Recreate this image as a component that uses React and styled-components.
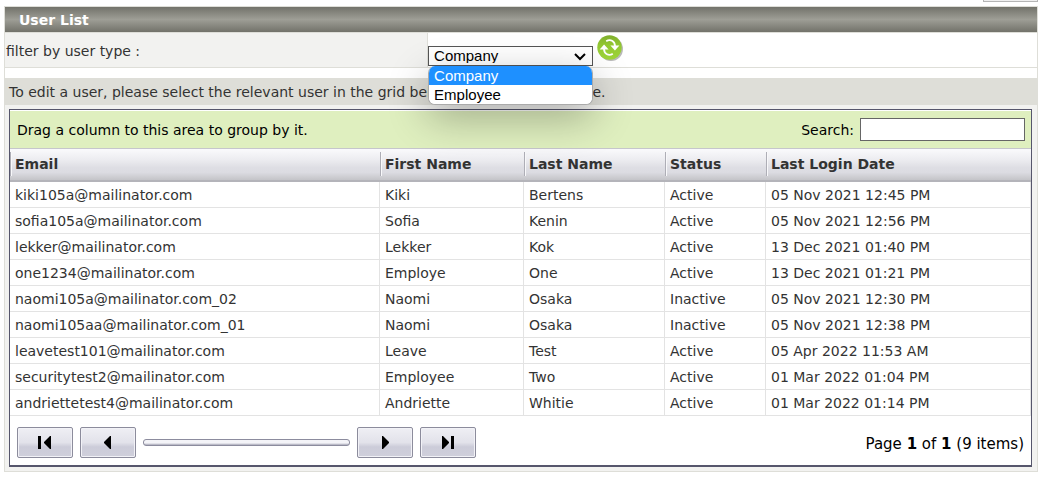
import { useState } from 'react';
import styled, { createGlobalStyle } from 'styled-components';

const userTypes = ['Company', 'Employee'];

const columns = [
  { key: 'email', label: 'Email' },
  { key: 'firstName', label: 'First Name', width: 144 },
  { key: 'lastName', label: 'Last Name', width: 141 },
  { key: 'status', label: 'Status', width: 101 },
  { key: 'lastLogin', label: 'Last Login Date', width: 265 },
];

const users = [
  { email: 'kiki105a@mailinator.com', firstName: 'Kiki', lastName: 'Bertens', status: 'Active', lastLogin: '05 Nov 2021 12:45 PM' },
  { email: 'sofia105a@mailinator.com', firstName: 'Sofia', lastName: 'Kenin', status: 'Active', lastLogin: '05 Nov 2021 12:56 PM' },
  { email: 'lekker@mailinator.com', firstName: 'Lekker', lastName: 'Kok', status: 'Active', lastLogin: '13 Dec 2021 01:40 PM' },
  { email: 'one1234@mailinator.com', firstName: 'Employe', lastName: 'One', status: 'Active', lastLogin: '13 Dec 2021 01:21 PM' },
  { email: 'naomi105a@mailinator.com_02', firstName: 'Naomi', lastName: 'Osaka', status: 'Inactive', lastLogin: '05 Nov 2021 12:30 PM' },
  { email: 'naomi105aa@mailinator.com_01', firstName: 'Naomi', lastName: 'Osaka', status: 'Inactive', lastLogin: '05 Nov 2021 12:38 PM' },
  { email: 'leavetest101@mailinator.com', firstName: 'Leave', lastName: 'Test', status: 'Active', lastLogin: '05 Apr 2022 11:53 AM' },
  { email: 'securitytest2@mailinator.com', firstName: 'Employee', lastName: 'Two', status: 'Active', lastLogin: '01 Mar 2022 01:04 PM' },
  { email: 'andriettetest4@mailinator.com', firstName: 'Andriette', lastName: 'Whitie', status: 'Active', lastLogin: '01 Mar 2022 01:14 PM' },
];

const RefreshIcon = () => (
  <svg width="27" height="27" viewBox="0 0 27 27" aria-hidden="true">
    <defs>
      <linearGradient id="refreshFill" x1="0" y1="0" x2="0" y2="1">
        <stop offset="0" stopColor="#7fae2c" />
        <stop offset="0.4" stopColor="#93c832" />
        <stop offset="1" stopColor="#9fd63a" />
      </linearGradient>
    </defs>
    <circle cx="14" cy="14" r="12" fill="#8a8a8a" opacity="0.6" />
    <circle cx="12.5" cy="12.5" r="12.2" fill="url(#refreshFill)" />
    <g fill="none" stroke="#fff" strokeWidth="1.8">
      <path d="M9.2 6.2c4-2.4 8.6-.4 8.8 4.8" />
      <path d="M15.8 18.8c-4 2.4-8.6.4-8.8-4.8" />
    </g>
    <path d="M13.4 10.6h9l-4.5 4.8z" fill="#fff" />
    <path d="M2.6 14.4h9l-4.5-4.8z" fill="#fff" />
  </svg>
);

const PagerIcon = ({ shape }) => (
  <svg width="14" height="14" viewBox="0 0 14 14" fill="#000" aria-hidden="true">
    {shape === 'first' && <path d="M0 0h3v13H0zM13 0v13h-1L6 7V6l6-6z" />}
    {shape === 'previous' && <path d="M10 0v13H9L3 7V6l6-6z" />}
    {shape === 'next' && <path d="M4 0v13h1l6-6V6L5 0z" />}
    {shape === 'last' && <path d="M1 0v13h1l6-6V6L2 0zM10 0h3v13h-3z" />}
  </svg>
);

const App = () => {
  const [userType, setUserType] = useState('Company');
  const [open, setOpen] = useState(true);
  const [search, setSearch] = useState('');

  const rows = users.filter((user) =>
    Object.values(user).join(' ').toLowerCase().includes(search.toLowerCase())
  );

  const chooseType = (type) => {
    setUserType(type);
    setOpen(false);
  };

  return (
    <>
      <GlobalStyle />
      <Page>
        <ActionStrip>
          <ActionButton type="button" aria-label="Action" />
        </ActionStrip>
        <Panel>
          <PanelTitle>User List</PanelTitle>
          <FilterRow>
            <FilterLabel htmlFor="userType">filter by user type :</FilterLabel>
            <FilterField>
              <SelectWrapper>
                <TypeSelect
                  id="userType"
                  value={userType}
                  onChange={(event) => chooseType(event.target.value)}
                >
                  {userTypes.map((type) => (
                    <option key={type}>{type}</option>
                  ))}
                </TypeSelect>
                <SelectArrow viewBox="0 0 14 8" aria-hidden="true">
                  <path d="M2 1l5 5 5-5" fill="none" stroke="#000" strokeWidth="2" />
                </SelectArrow>
                {open && (
                  <TypeList role="listbox" aria-label="user type">
                    {userTypes.map((type) => (
                      <TypeOption
                        key={type}
                        role="option"
                        aria-selected={type === userType}
                        $selected={type === userType}
                        onClick={() => chooseType(type)}
                      >
                        {type}
                      </TypeOption>
                    ))}
                  </TypeList>
                )}
              </SelectWrapper>
              <RefreshButton type="button" aria-label="Refresh" onClick={() => setSearch('')}>
                <RefreshIcon />
              </RefreshButton>
            </FilterField>
          </FilterRow>
          <Note>
            To edit a user, please select the relevant user in the grid below and then click above.
          </Note>
          <GridArea>
            <Grid>
              <GroupPanel>
                <span>Drag a column to this area to group by it.</span>
                <SearchLabel>
                  Search:
                  <SearchInput
                    type="text"
                    value={search}
                    onChange={(event) => setSearch(event.target.value)}
                  />
                </SearchLabel>
              </GroupPanel>
              <UserTable>
                <thead>
                  <tr>
                    {columns.map((column) => (
                      <HeaderCell key={column.key} $width={column.width}>
                        <HeaderText>{column.label}</HeaderText>
                      </HeaderCell>
                    ))}
                  </tr>
                </thead>
                <tbody>
                  {rows.map((user) => (
                    <tr key={user.email}>
                      {columns.map((column) => (
                        <Cell key={column.key}>{user[column.key]}</Cell>
                      ))}
                    </tr>
                  ))}
                </tbody>
              </UserTable>
              <Pager>
                <PagerControls>
                  <PagerButton type="button" aria-label="First page">
                    <PagerIcon shape="first" />
                  </PagerButton>
                  <PagerButton type="button" aria-label="Previous page">
                    <PagerIcon shape="previous" />
                  </PagerButton>
                  <PagerTrack />
                  <PagerButton type="button" aria-label="Next page">
                    <PagerIcon shape="next" />
                  </PagerButton>
                  <PagerButton type="button" aria-label="Last page">
                    <PagerIcon shape="last" />
                  </PagerButton>
                </PagerControls>
                <PageCount>
                  Page <b>1</b> of <b>1</b> ({rows.length} items)
                </PageCount>
              </Pager>
            </Grid>
          </GridArea>
        </Panel>
      </Page>
    </>
  );
};

const GlobalStyle = createGlobalStyle`
  * {
    box-sizing: border-box;
  }

  body {
    margin: 0;
    background-color: #fff;
    color: #333;
    font-family: Verdana, "DejaVu Sans", sans-serif;
    font-size: 14px;
    line-height: 18px;
  }
`;

const Page = styled.main`
  padding: 0 4px;
`;

const ActionStrip = styled.div`
  display: flex;
  justify-content: flex-end;
  align-items: flex-end;
  height: 2px;
  margin-bottom: 4px;
  overflow: hidden;
`;

const ActionButton = styled.button`
  flex: none;
  width: 55px;
  height: 24px;
  background-color: #efefef;
  border: 1px solid #b5b5b5;
`;

const Panel = styled.section`
  border: 1px solid #deded8;
`;

const PanelTitle = styled.h1`
  margin: 0;
  padding: 4px 14px 3px;
  background: linear-gradient(#72726a, #9e9e96 50%, #72726a);
  color: #fff;
  font-size: 14px;
  font-weight: bold;
  line-height: 18px;
`;

const FilterRow = styled.div`
  display: grid;
  grid-template-columns: 41% 1fr;
  margin-bottom: 10px;
  border: solid #deded8;
  border-width: 1px 0;
`;

const FilterLabel = styled.label`
  display: flex;
  align-items: center;
  padding: 2px 1px 0;
  background-color: #f2f2f0;
  border-right: 1px solid #deded8;
`;

const FilterField = styled.div`
  display: flex;
  align-items: flex-start;
  gap: 4px;
  height: 34px;
  padding-top: 2px;
`;

const SelectWrapper = styled.div`
  position: relative;
  align-self: flex-end;
  width: 165px;
  margin-bottom: 1px;
`;

const TypeSelect = styled.select`
  display: block;
  width: 100%;
  height: 20px;
  padding: 0 5px 2px;
  appearance: none;
  background-color: #fff;
  border: 1px solid #555;
  border-radius: 0;
  color: #000;
  font-family: Arial, "Liberation Sans", sans-serif;
  font-size: 15px;
`;

const SelectArrow = styled.svg`
  position: absolute;
  top: 7px;
  right: 6px;
  width: 14px;
  height: 8px;
  pointer-events: none;
`;

const TypeList = styled.ul`
  position: absolute;
  top: 100%;
  left: 0;
  z-index: 1;
  width: 100%;
  margin: 0;
  padding: 0;
  overflow: hidden;
  background-color: #fff;
  border: solid #aaa;
  border-width: 0 1px 1px;
  border-radius: 7px;
  box-shadow: 0 12px 40px rgba(0, 0, 0, 0.3);
  color: #000;
  font-family: Arial, "Liberation Sans", sans-serif;
  font-size: 15px;
  line-height: 19px;
  list-style: none;
`;

const TypeOption = styled.li`
  padding: 0 5px;
  background-color: ${({ $selected }) => ($selected ? '#1e90ff' : '#fff')};
  color: ${({ $selected }) => ($selected ? '#fff' : '#000')};
  cursor: default;
`;

const RefreshButton = styled.button`
  display: flex;
  padding: 0;
  background: none;
  border: none;
  cursor: pointer;
`;

const Note = styled.p`
  margin: 0;
  padding: 5px 4px 4px;
  background-color: #deded8;
`;

const GridArea = styled.div`
  padding: 4px 5px 4px 4px;
  background-color: #f2f2f0;
`;

const Grid = styled.div`
  background-color: #fff;
  border: 1px solid #56566c;
  border-bottom-width: 2px;
`;

const GroupPanel = styled.div`
  display: flex;
  justify-content: space-between;
  align-items: center;
  padding: 7px 6px 7px 7px;
  background-color: #dfefbf;
  border-top: 1px solid #fff;
  color: #000;
`;

const SearchLabel = styled.label`
  display: flex;
  align-items: center;
  gap: 6px;
`;

const SearchInput = styled.input`
  width: 165px;
  height: 23px;
  background-color: #fff;
  border: 1px solid #666;
  font: inherit;
`;

const UserTable = styled.table`
  width: 100%;
  table-layout: fixed;
  border-collapse: separate;
  border-spacing: 0;
`;

const HeaderCell = styled.th`
  width: ${({ $width }) => ($width ? `${$width}px` : 'auto')};
  padding: 3px 0 4px;
  background: linear-gradient(#fafafc, #ececf0 35%, #dedee4 60%, #dcdce2 75%, #c4c4c8);
  border-top: 1px solid #c6c6cc;
  border-bottom: 2px solid #b4b4ba;
  text-align: left;
`;

const HeaderText = styled.div`
  padding: 3px 4px;
  border-left: 1px solid #aeaeb6;
  box-shadow: inset 1px 0 #f8f8fa;
`;

const Cell = styled.td`
  padding: 4px 4px 3px 5px;
  border-right: 1px solid #e3e3e3;
  border-bottom: 1px solid #e3e3e3;
`;

const Pager = styled.div`
  display: flex;
  justify-content: space-between;
  align-items: center;
  padding: 11px 7px 7px;
  color: #000;
`;

const PagerControls = styled.div`
  display: flex;
  align-items: center;
  gap: 7px;
`;

const PagerButton = styled.button`
  display: flex;
  align-items: center;
  justify-content: center;
  width: 56px;
  height: 31px;
  padding: 0;
  background: linear-gradient(#efeff4, #e2e2ea 50%, #ccccd9 65%, #cfcfdb);
  border: 1px solid #8c8c9c;
  border-radius: 2px;
  box-shadow: inset 0 0 0 1px #f2f2f7;
`;

const PagerTrack = styled.div`
  width: 207px;
  height: 7px;
  background: linear-gradient(#f4f4f8 60%, #a8a8b8);
  border: 1px solid #8c8c9e;
  border-radius: 3px;
`;

const PageCount = styled.span`
  padding-top: 2px;
  font-size: 15px;
`;

export default App;
